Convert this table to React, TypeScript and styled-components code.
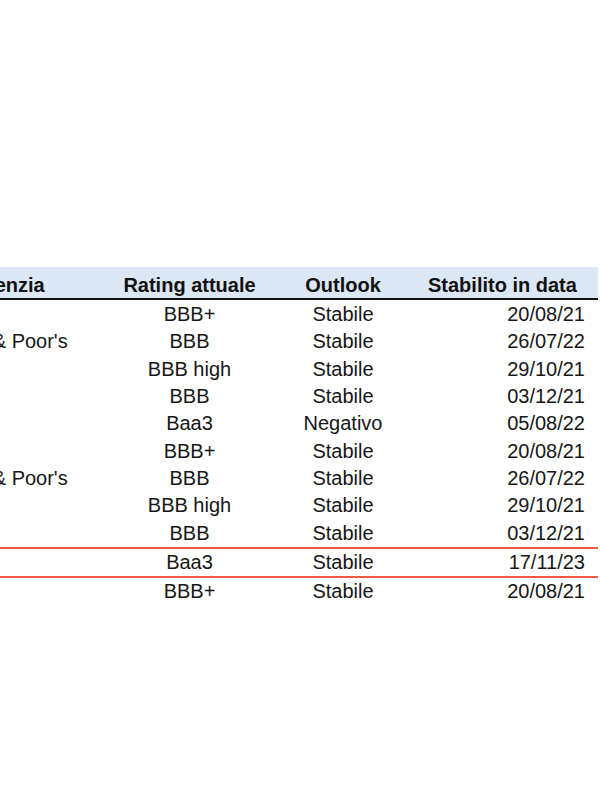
import React from "react";
import styled, { createGlobalStyle } from "styled-components";

const GlobalStyle = createGlobalStyle`
  html, body {
    margin: 0;
    padding: 0;
    background: #ffffff;
    overflow: hidden;
  }
  body {
    font-family: "Liberation Sans", Arial, sans-serif;
    color: #141414;
  }
`;

const COLS = "210px 159px 148px 181px";

const Page = styled.div`
  width: 600px;
  height: 800px;
  overflow: hidden;
  padding-top: 267px;
  box-sizing: border-box;
`;

const Table = styled.div`
  margin-left: -100px;
  width: 698px;
  display: flex;
  flex-direction: column;
`;

const HeaderRow = styled.div`
  display: grid;
  grid-template-columns: ${COLS};
  height: 31px;
  background: #dce7f5;
  border-bottom: 2px solid #111;
  box-sizing: content-box;
`;

const HeadCell = styled.div<{ $align: "left" | "center"; $pad?: number }>`
  font-weight: 700;
  font-size: 20px;
  line-height: 25px;
  padding-top: 6px;
  text-align: ${(p) => p.$align};
  padding-left: ${(p) => p.$pad ?? 0}px;
  white-space: nowrap;
  color: #111;
`;

const Body = styled.div`
  padding-top: 1px;
  display: flex;
  flex-direction: column;
`;

const Row = styled.div<{ $highlight?: boolean }>`
  display: grid;
  grid-template-columns: ${COLS};
  height: ${(p) => (p.$highlight ? "27px" : "27.3px")};
  border-top: ${(p) => (p.$highlight ? "2px solid #ea5a40" : "none")};
  border-bottom: ${(p) => (p.$highlight ? "2px solid #ea5a40" : "none")};
  box-sizing: content-box;
`;

const Cell = styled.div<{ $align: "left" | "center" | "right"; $padL?: number; $padR?: number }>`
  font-size: 20px;
  display: flex;
  align-items: center;
  justify-content: ${(p) =>
    p.$align === "left" ? "flex-start" : p.$align === "right" ? "flex-end" : "center"};
  padding-left: ${(p) => p.$padL ?? 0}px;
  padding-right: ${(p) => p.$padR ?? 0}px;
  white-space: nowrap;
  color: #161616;
`;

type Entry = {
  agency: string;
  rating: string;
  outlook: string;
  date: string;
  highlight?: boolean;
};

const rows: Entry[] = [
  { agency: "Fitch", rating: "BBB+", outlook: "Stabile", date: "20/08/21" },
  { agency: "Standard & Poor's", rating: "BBB", outlook: "Stabile", date: "26/07/22" },
  { agency: "DBRS", rating: "BBB high", outlook: "Stabile", date: "29/10/21" },
  { agency: "Scope", rating: "BBB", outlook: "Stabile", date: "03/12/21" },
  { agency: "Moody's", rating: "Baa3", outlook: "Negativo", date: "05/08/22" },
  { agency: "Fitch", rating: "BBB+", outlook: "Stabile", date: "20/08/21" },
  { agency: "Standard & Poor's", rating: "BBB", outlook: "Stabile", date: "26/07/22" },
  { agency: "DBRS", rating: "BBB high", outlook: "Stabile", date: "29/10/21" },
  { agency: "Scope", rating: "BBB", outlook: "Stabile", date: "03/12/21" },
  { agency: "Moody's", rating: "Baa3", outlook: "Stabile", date: "17/11/23", highlight: true },
  { agency: "Fitch", rating: "BBB+", outlook: "Stabile", date: "20/08/21" },
];

export default function App() {
  return (
    <>
      <GlobalStyle />
      <Page>
        <Table>
          <HeaderRow>
            <HeadCell $align="left" $pad={68}>Agenzia</HeadCell>
            <HeadCell $align="center">Rating attuale</HeadCell>
            <HeadCell $align="center">Outlook</HeadCell>
            <HeadCell $align="left" $pad={11}>Stabilito in data</HeadCell>
          </HeaderRow>
          <Body>
            {rows.map((r, i) => (
              <Row key={i} $highlight={r.highlight}>
                <Cell $align="left" $padL={6}>{r.agency}</Cell>
                <Cell $align="center">{r.rating}</Cell>
                <Cell $align="center">{r.outlook}</Cell>
                <Cell $align="right" $padR={13}>{r.date}</Cell>
              </Row>
            ))}
          </Body>
        </Table>
      </Page>
    </>
  );
}
